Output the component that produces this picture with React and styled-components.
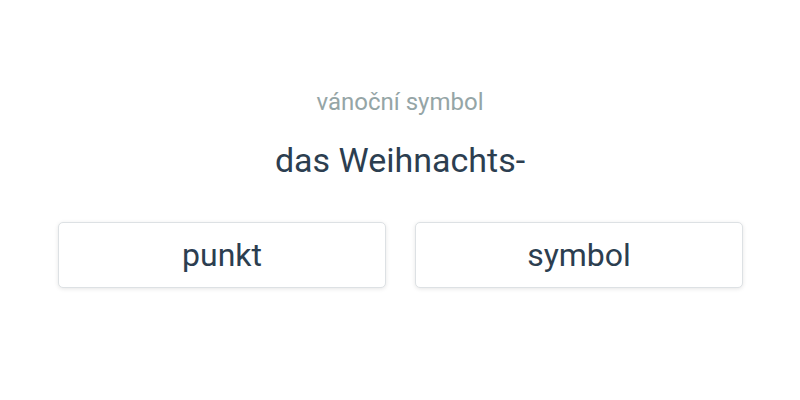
import React from "react";
import styled, { createGlobalStyle } from "styled-components";

const Global = createGlobalStyle`
  html, body { margin: 0; padding: 0; background: #fff; }
  body { font-family: Roboto, "Noto Sans", sans-serif; }
`;

const Page = styled.div`
  width: 800px;
  height: 400px;
  display: flex;
  flex-direction: column;
  align-items: center;
  padding-top: 88px;
  box-sizing: border-box;
`;

const Hint = styled.div`
  font-size: 24px;
  line-height: 28px;
  color: #95a5a6;
`;

const Prompt = styled.div`
  margin-top: 24px;
  font-size: 34px;
  line-height: 40px;
  color: #2c3e50;
`;

const Options = styled.div`
  margin-top: 42px;
  margin-left: 1px;
  width: 685px;
  display: grid;
  grid-template-columns: 1fr 1fr;
  gap: 29px;
`;

const Option = styled.button`
  height: 66px;
  background: #fff;
  border: 1px solid #dde1e4;
  border-radius: 5px;
  box-shadow: 0 1px 4px rgba(0, 0, 0, 0.1);
  font-family: Roboto, "Noto Sans", sans-serif;
  font-size: 32px;
  color: #2c3e50;
  cursor: pointer;
  padding: 0;
`;

export default function App() {
  return (
    <>
      <Global />
      <Page>
        <Hint>vánoční symbol</Hint>
        <Prompt>das Weihnachts-</Prompt>
        <Options>
          <Option>punkt</Option>
          <Option>symbol</Option>
        </Options>
      </Page>
    </>
  );
}
